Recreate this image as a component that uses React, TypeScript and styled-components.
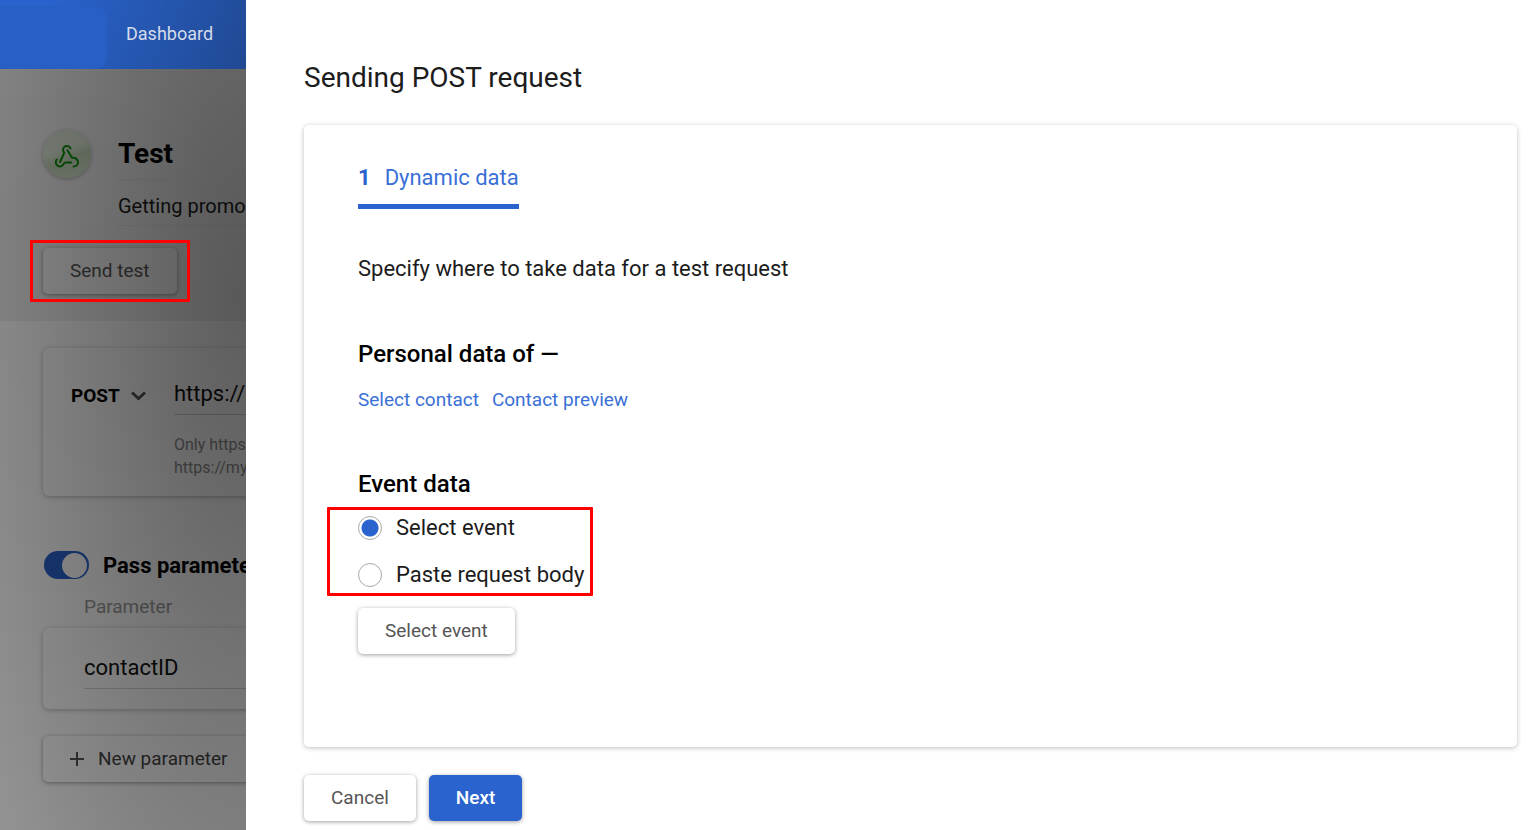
import React, { useState } from "react";
import styled, { createGlobalStyle, css } from "styled-components";

const GlobalStyle = createGlobalStyle`
  *, *::before, *::after { box-sizing: border-box; }
  body { margin: 0; background: #fff; font-family: Roboto, "Liberation Sans", sans-serif; color: #1c1c1c; }
  h1, h2, p, fieldset { margin: 0; padding: 0; border: 0; }
  button, input { font-family: inherit; }
`;

const blue = "#2a63cd";

const Screen = styled.div`
  display: grid;
  grid-template-columns: 246px minmax(0, 1fr);
  min-height: 100vh;
  overflow: hidden;
`;

/* Page behind the drawer */
const Backdrop = styled.div`
  position: relative;
  overflow: hidden;
  white-space: nowrap;
  background: #fff;
`;

const Shade = styled.div`
  position: absolute;
  inset: 69px 0 0;
  z-index: 2;
  pointer-events: none;
  background: radial-gradient(
    ellipse 300px 820px at 100% 230px,
    rgba(0, 0, 0, 0.63),
    rgba(0, 0, 0, 0.6) 20%,
    rgba(0, 0, 0, 0.43)
  );
`;

const TopBar = styled.header`
  display: flex;
  align-items: center;
  height: 69px;
  background: linear-gradient(115deg, #2a63ce 15%, #2659b6 50%, #204993);
`;

const Brand = styled.div`
  align-self: flex-end;
  width: 107px;
  height: 63px;
  border-radius: 0 12px 12px 0;
  background: #285fc4;
`;

const NavLink = styled.a`
  margin-left: 19px;
  padding-bottom: 2px;
  font-size: 18px;
  line-height: 24px;
  color: #d5dcec;
  text-decoration: none;
`;

const Hero = styled.section`
  height: 252px;
  padding: 61px 0 0 43px;
  background: #f0f0f0;
`;

const HeroHead = styled.div`
  display: grid;
  grid-template-columns: 48px 1fr;
  column-gap: 27px;
  justify-items: start;
  margin-bottom: 22px;
`;

const Avatar = styled.div`
  display: flex;
  align-items: center;
  justify-content: center;
  width: 48px;
  height: 48px;
  padding-top: 4px;
  border-radius: 50%;
  background: linear-gradient(160deg, #dce8d6 10%, #e0ecda 40%, #c6d8ba 58%, #dbead2);
  box-shadow: 0 1px 4px rgba(0, 0, 0, 0.3);
`;

const HeroTitle = styled.h1`
  height: 50px;
  padding-top: 6px;
  font-size: 28px;
  line-height: 36px;
  font-weight: 700;
  color: #000;
  border-bottom: 1px solid #e4e4e4;
`;

const HeroText = styled.p`
  grid-column: 2;
  width: 300px;
  height: 46px;
  padding-top: 11px;
  font-size: 20px;
  line-height: 30px;
  border-bottom: 1px solid #e4e4e4;
`;

/* Red frame that draws attention to the control inside it */
const Marked = styled.div<{ $inset: string }>`
  position: relative;
  width: fit-content;
  &::after {
    content: "";
    position: absolute;
    inset: ${(p) => p.$inset};
    z-index: 3;
    border: 3px solid #fe0000;
    border-radius: 1px;
    pointer-events: none;
  }
`;

const Button = styled.button<{ $primary?: boolean }>`
  height: 46px;
  padding: 0 27px;
  border: 0;
  border-radius: 5px;
  background: #fff;
  color: #555;
  font-size: 19px;
  line-height: 24px;
  box-shadow: 0 1px 4px rgba(0, 0, 0, 0.38);
  cursor: pointer;
  ${(p) =>
    p.$primary &&
    css`
      background: ${blue};
      color: #fff;
      font-weight: 500;
    `}
`;

const SendButton = styled(Button)`
  background: #f8f8f8;
`;

const AddButton = styled(Button)`
  display: flex;
  align-items: center;
  gap: 14px;
  width: 300px;
  margin-top: 27px;
  color: #444;
`;

const Body = styled.section`
  padding: 27px 0 0 43px;
`;

const Panel = styled.div`
  width: 600px;
  border-radius: 6px;
  background: #fff;
  box-shadow: 0 1px 5px rgba(0, 0, 0, 0.28);
`;

const UrlPanel = styled(Panel)`
  display: flex;
  align-items: flex-start;
  height: 148px;
  padding: 27px 0 0 28px;
`;

const Method = styled.button`
  display: flex;
  align-items: center;
  gap: 11px;
  width: 103px;
  height: 40px;
  padding: 0;
  border: 0;
  background: none;
  font-size: 19px;
  font-weight: 700;
  color: #000;
`;

const Field = styled.input`
  display: block;
  width: 400px;
  height: 40px;
  padding: 0 0 2px;
  border: 0;
  border-bottom: 1px solid #d2d2d2;
  background: transparent;
  font-size: 22px;
  color: #111;
  outline: 0;
`;

const Hint = styled.p`
  margin-top: 18px;
  font-size: 16px;
  line-height: 23px;
  color: #8c8c8c;
`;

const ToggleRow = styled.label`
  display: flex;
  align-items: center;
  gap: 14px;
  height: 30px;
  margin: 54px 0 0 1px;
  font-size: 22px;
  font-weight: 700;
  color: #000;
`;

const Toggle = styled.input`
  appearance: none;
  display: flex;
  flex: none;
  align-items: center;
  width: 45px;
  height: 28px;
  margin: 0;
  padding: 2px;
  border-radius: 14px;
  background: #2a62cc;
  &::before {
    content: "";
    width: 25px;
    height: 25px;
    border-radius: 50%;
    background: #fff;
  }
  &:checked {
    justify-content: flex-end;
  }
`;

const ColumnLabel = styled.label`
  display: block;
  margin-left: 41px;
  padding: 15px 0 9px;
  font-size: 19px;
  line-height: 24px;
  color: #9a9a9a;
`;

const ParamPanel = styled(Panel)`
  height: 81px;
  padding: 21px 0 0 41px;
`;

/* Drawer */
const Drawer = styled.main`
  padding: 60px 13px 8px 58px;
  background: #fff;
`;

const DrawerTitle = styled.h1`
  font-size: 28px;
  line-height: 36px;
  font-weight: 400;
`;

const Card = styled.section`
  margin-top: 29px;
  padding: 38px 54px 93px;
  border-radius: 5px;
  box-shadow: 0 1px 5px rgba(0, 0, 0, 0.26);
`;

const Step = styled.div`
  display: flex;
  gap: 14px;
  width: fit-content;
  padding-bottom: 11px;
  border-bottom: 5px solid ${blue};
  font-size: 22px;
  line-height: 30px;
  color: #3a70d6;
  b {
    color: ${blue};
  }
`;

const Lead = styled.p`
  margin-top: 45px;
  font-size: 22px;
  line-height: 30px;
`;

const Subtitle = styled.h2`
  margin-top: 55px;
  font-size: 24px;
  line-height: 30px;
  font-weight: 500;
  color: #000;
`;

const Links = styled.div`
  display: flex;
  gap: 13px;
  margin: 19px 0 57px;
  a {
    font-size: 19px;
    line-height: 24px;
    color: #3a70d6;
    text-decoration: none;
  }
  & + ${Subtitle} {
    margin-top: 0;
  }
`;

const Options = styled.fieldset`
  display: flex;
  flex-direction: column;
  gap: 17px;
  margin-top: 14px;
`;

const Option = styled.label`
  display: flex;
  align-items: center;
  gap: 14px;
  font-size: 22px;
  line-height: 30px;
`;

const Radio = styled.input`
  appearance: none;
  width: 24px;
  height: 24px;
  margin: 0;
  border: 1px solid #a9a9a9;
  border-radius: 50%;
  background: #fff;
  &:checked {
    background: radial-gradient(circle, ${blue} 8px, #fff 9px);
  }
`;

const PickButton = styled(Button)`
  margin-top: 18px;
`;

const Footer = styled.footer`
  display: flex;
  gap: 13px;
  margin-top: 28px;
`;

const WebhookIcon = () => (
  <svg width="24" height="23" viewBox="0 0 24 23" fill="none" stroke="#0a8f0a" strokeWidth="2" strokeLinecap="round" strokeLinejoin="round" aria-hidden="true">
    <path d="M15.6 3.4C14.8 1.8 13.4 1 12 1 9.6 1 8 2.8 8 4.9c0 1.1.5 2 1.3 2.8L5 17" />
    <path d="M12.4 5.2 17 12.8c3-.6 6 1.2 6 4.4 0 2.4-1.8 4.2-4.4 4.2" />
    <path d="M1.8 14.6C.6 16 .6 18.200 1.600 19.700c1.600 2.400 5.400 2.400 6.700-.3.500-1.300 1.200-2 2.600-2h5.300" />
  </svg>
);

export default function App() {
  const [source, setSource] = useState("event");
  return (
    <>
      <GlobalStyle />
      <Screen>
        <Backdrop>
          <TopBar>
            <Brand />
            <NavLink href="#dashboard">Dashboard</NavLink>
          </TopBar>
          <Hero>
            <HeroHead>
              <Avatar>
                <WebhookIcon />
              </Avatar>
              <HeroTitle>Test</HeroTitle>
              <HeroText>Getting promo</HeroText>
            </HeroHead>
            <Marked $inset="-8px -13px">
              <SendButton type="button">Send test</SendButton>
            </Marked>
          </Hero>
          <Body>
            <UrlPanel>
              <Method type="button">
                POST
                <svg width="15" height="12" viewBox="0 0 15 12" fill="none" stroke="#555" strokeWidth="3" aria-hidden="true">
                  <path d="M1 3.500l6.500 6 6.500-6" />
                </svg>
              </Method>
              <div>
                <Field aria-label="Request URL" defaultValue="https://" />
                <Hint>
                  Only https
                  <br />
                  https://my
                </Hint>
              </div>
            </UrlPanel>
            <ToggleRow>
              <Toggle type="checkbox" defaultChecked />
              Pass paramete
            </ToggleRow>
            <ColumnLabel htmlFor="param-name">Parameter</ColumnLabel>
            <ParamPanel>
              <Field id="param-name" defaultValue="contactID" />
            </ParamPanel>
            <AddButton type="button">
              <svg width="14" height="14" viewBox="0 0 14 14" stroke="#555" strokeWidth="2" aria-hidden="true">
                <path d="M7 0v14M0 7h14" />
              </svg>
              New parameter
            </AddButton>
          </Body>
          <Shade />
        </Backdrop>

        <Drawer>
          <DrawerTitle>Sending POST request</DrawerTitle>
          <Card>
            <Step>
              <b>1</b>
              <span>Dynamic data</span>
            </Step>
            <Lead>Specify where to take data for a test request</Lead>
            <Subtitle>Personal data of —</Subtitle>
            <Links>
              <a href="#contact">Select contact</a>
              <a href="#preview">Contact preview</a>
            </Links>
            <Subtitle>Event data</Subtitle>
            <Marked $inset="-6px -9px -6px -31px">
              <Options aria-label="Event data">
                <Option>
                  <Radio type="radio" name="source" checked={source === "event"} onChange={() => setSource("event")} />
                  Select event
                </Option>
                <Option>
                  <Radio type="radio" name="source" checked={source === "body"} onChange={() => setSource("body")} />
                  Paste request body
                </Option>
              </Options>
            </Marked>
            <PickButton type="button">Select event</PickButton>
          </Card>
          <Footer>
            <Button type="button">Cancel</Button>
            <Button type="button" $primary>
              Next
            </Button>
          </Footer>
        </Drawer>
      </Screen>
    </>
  );
}
